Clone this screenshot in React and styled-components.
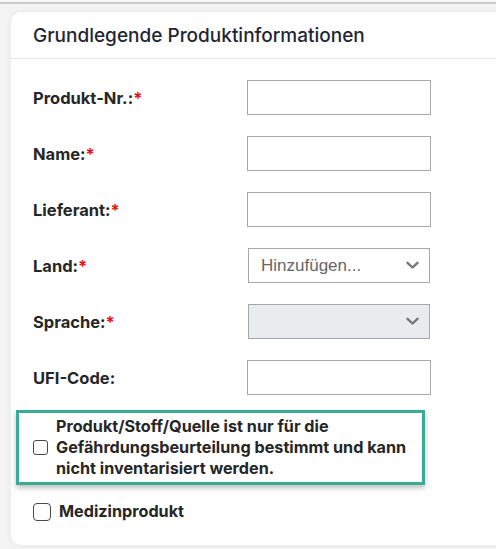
import React from "react";
import styled, { createGlobalStyle } from "styled-components";

const Global = createGlobalStyle`
  html, body { margin: 0; padding: 0; }
  body {
    background: #f3f3f3;
    font-family: Inter, "Noto Sans", sans-serif;
  }
`;

const Page = styled.div`
  border-top: 2px solid #f8f8f8;
  width: 496px;
  height: 549px;
  overflow: hidden;
`;

const TopRule = styled.div`
  height: 2px;
  background: #c9c9c9;
  margin-bottom: 8px;
`;

const Card = styled.div`
  margin-left: 11px;
  margin-right: -20px;
  background: #fff;
  border-radius: 10px;
  box-shadow: 0 0 6px rgba(0, 0, 0, 0.06);
  padding-bottom: 23px;
`;

const Header = styled.div`
  height: 46px;
  display: flex;
  align-items: center;
  padding-left: 22px;
  border-bottom: 1px solid #e4e7eb;
  font-size: 19px;
  color: #1f2633;
  font-weight: 500;
`;

const Form = styled.div`
  padding: 21px 0 0 22px;
  display: grid;
  grid-template-columns: 214px 184px;
  row-gap: 21px;
  align-items: center;
`;

const Label = styled.label`
  font-size: 16.5px;
  font-weight: 700;
  color: #262626;
`;

const Req = styled.span`
  color: #f01010;
`;

const Input = styled.div`
  box-sizing: border-box;
  height: 35px;
  border: 1px solid #a8a8a8;
  background: #fff;
`;

const Select = styled.div`
  box-sizing: border-box;
  height: 35px;
  margin: 0 1px;
  border: 1px solid #a8a8a8;
  background: ${(p) => (p.disabled ? "#e9ecef" : "#fff")};
  display: flex;
  align-items: center;
  justify-content: space-between;
  padding: 0 10px 0 12px;
  font-family: "Liberation Sans", Arial, sans-serif;
  font-size: 17px;
  color: #666;
`;

const Chevron = () => (
  <svg width="13" height="9" viewBox="0 0 13 9">
    <path d="M1.5 1.8 L6.5 6.5 L11.5 1.8" fill="none" stroke="#777" strokeWidth="2.4" strokeLinecap="round" strokeLinejoin="round" />
  </svg>
);

const Highlight = styled.div`
  margin: 15px 0 0 5px;
  width: 409px;
  box-sizing: border-box;
  border: 3px solid #3aab96;
  box-shadow: 0 3px 5px rgba(0, 0, 0, 0.25);
  display: flex;
  align-items: center;
  padding: 3px 0 3px 14px;
`;

const Box = styled.span`
  flex: none;
  box-sizing: border-box;
  width: ${(p) => p.size}px;
  height: ${(p) => p.size}px;
  border: 1px solid #4a4a4a;
  border-radius: ${(p) => (p.size > 16 ? 4 : 3)}px;
  background: #fff;
`;

const CheckText = styled.span`
  font-size: 16.2px;
  font-weight: 700;
  color: #262626;
  line-height: 21px;
  margin-left: ${(p) => p.gap}px;
`;

const CheckRow = styled.div`
  display: flex;
  align-items: center;
  margin: 16px 0 0 22px;
`;

export default function App() {
  const fields = [
    { label: "Produkt-Nr.:", type: "input" },
    { label: "Name:", type: "input" },
    { label: "Lieferant:", type: "input" },
    { label: "Land:", type: "select" },
    { label: "Sprache:", type: "disabled" },
    { label: "UFI-Code:", type: "input", optional: true },
  ];
  return (
    <Page>
      <Global />
      <TopRule />
      <Card>
        <Header>Grundlegende Produktinformationen</Header>
        <Form>
          {fields.map((f) => (
            <React.Fragment key={f.label}>
              <Label>
                {f.label}
                {!f.optional && <Req>*</Req>}
              </Label>
              {f.type === "input" && <Input />}
              {f.type === "select" && (
                <Select>
                  <span>Hinzufügen...</span>
                  <Chevron />
                </Select>
              )}
              {f.type === "disabled" && (
                <Select disabled>
                  <span />
                  <Chevron />
                </Select>
              )}
            </React.Fragment>
          ))}
        </Form>
        <Highlight>
          <Box size={15} />
          <CheckText gap={8}>
            Produkt/Stoff/Quelle ist nur für die Gefährdungsbeurteilung bestimmt und kann nicht inventarisiert werden.
          </CheckText>
        </Highlight>
        <CheckRow>
          <Box size={18} />
          <CheckText gap={8}>Medizinprodukt</CheckText>
        </CheckRow>
      </Card>
    </Page>
  );
}
